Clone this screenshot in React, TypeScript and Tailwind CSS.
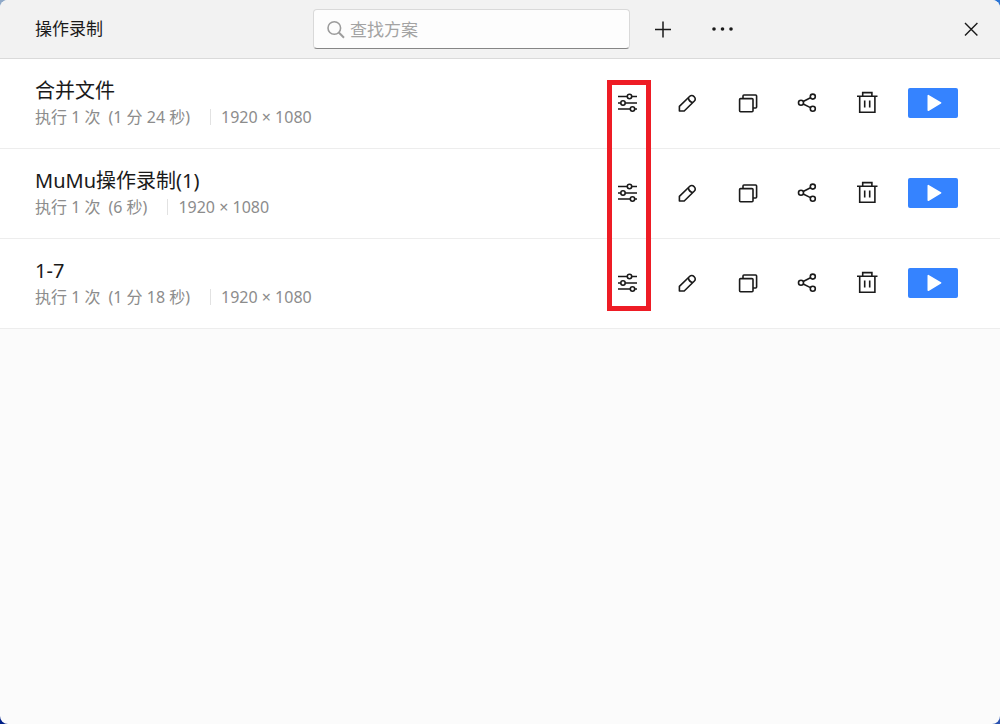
import { useState } from 'react';
import clsx from 'clsx';

interface Scheme {
    name: string;
    times: string;
    duration: string;
    size: string;
}

const schemes: Scheme[] = [
    { name: '合并文件', times: '执行 1 次', duration: '(1 分 24 秒)', size: '1920 × 1080' },
    { name: 'MuMu操作录制(1)', times: '执行 1 次', duration: '(6 秒)', size: '1920 × 1080' },
    { name: '1-7', times: '执行 1 次', duration: '(1 分 18 秒)', size: '1920 × 1080' },
];

function Icon({ children, className }: { children: React.ReactNode; className?: string }) {
    return (
        <svg
            viewBox="0 0 20 20"
            className={clsx('size-5 shrink-0 overflow-visible', className)}
            fill="none"
            stroke="currentColor"
            strokeWidth="1.6"
            aria-hidden="true"
        >
            {children}
        </svg>
    );
}

function IconButton({ label, children }: { label: string; children: React.ReactNode }) {
    return (
        <button type="button" aria-label={label} className="flex size-10 items-center justify-center rounded hover:bg-black/5">
            <Icon>{children}</Icon>
        </button>
    );
}

function TitleBar() {
    const [keyword, setKeyword] = useState('');

    return (
        <header className="flex items-center border-b border-[#dadada] bg-[#f2f2f2] py-[9px] pr-[9px] pl-[35px]">
            <h1 className="w-[278px] text-[17px] leading-7">操作录制</h1>

            <label className="flex h-10 w-[317px] items-center gap-1 rounded border border-[#d9d9d9] border-b-[#868686] bg-[#fdfdfd] px-3">
                <Icon className="text-[#9c9c9c]">
                    <circle cx="8.3" cy="9" r="6.3" />
                    <path d="M12.8 13.5L18 18.7" strokeWidth="2" />
                </Icon>
                <input
                    type="text"
                    aria-label="查找方案"
                    placeholder="查找方案"
                    value={keyword}
                    onChange={(e) => setKeyword(e.target.value)}
                    className="min-w-0 flex-1 bg-transparent pt-0.5 text-[17px] leading-7 outline-none placeholder:text-[#a3a3a3]"
                />
            </label>

            <div className="ml-[13px] flex gap-5">
                <IconButton label="新建">
                    <path d="M2 10.5h16M10 2.5v16" strokeWidth="1.5" />
                </IconButton>
                <IconButton label="更多">
                    <g fill="currentColor" stroke="none">
                        <circle cx="1" cy="10" r="1.8" />
                        <circle cx="9.5" cy="10" r="1.8" />
                        <circle cx="18" cy="10" r="1.8" />
                    </g>
                </IconButton>
            </div>

            <div className="ml-auto">
                <IconButton label="关闭">
                    <path d="M4 4l12.4 12.4M16.4 4L4 16.4" strokeWidth="1.4" />
                </IconButton>
            </div>
        </header>
    );
}

function SchemeRow({ scheme }: { scheme: Scheme }) {
    return (
        <li className="flex items-center gap-[21px] border-b border-[#ededed] bg-white pt-[18px] pr-[42px] pb-[19px] pl-[35px]">
            <div className="min-w-0 flex-1">
                <h2 className="text-xl leading-7">{scheme.name}</h2>
                <p className="flex items-center text-base leading-6 text-[#8c8c8c]">
                    <span>{scheme.times}</span>
                    <span className="ml-2">{scheme.duration}</span>
                    <span className="mr-2.5 ml-5 h-4 w-px bg-[#e2e2e2]" />
                    <span>{scheme.size}</span>
                </p>
            </div>

            <div className="flex gap-5">
                <IconButton label="设置">
                    <path d="M1 3.5h9.2M14.8 3.5H20M1 10h2.6M8.4 10H20M1 16h12.1M17.9 16H20" />
                    <circle cx="12.5" cy="3.5" r="2.2" />
                    <circle cx="6" cy="10" r="2.2" />
                    <circle cx="15.5" cy="16" r="2.2" />
                </IconButton>
                <IconButton label="编辑">
                    <path d="M2.4 18v-4.6L12.8 3.3a2.8 2.8 0 0 1 4 .1l.6.6a2.8 2.8 0 0 1 0 4L7.2 18zM11.4 5c.4 2.4 1.8 4 4.4 4.6" strokeLinejoin="round" />
                </IconButton>
                <IconButton label="复制">
                    <rect x="2.6" y="5.6" width="13.4" height="13.2" rx="1" />
                    <path d="M6 5.4V3a1 1 0 0 1 1-1h11.6a1 1 0 0 1 1 1v11a1 1 0 0 1-1 1H16" />
                </IconButton>
                <IconButton label="分享">
                    <circle cx="4" cy="9.8" r="2.5" />
                    <circle cx="15.8" cy="3.6" r="2.5" />
                    <circle cx="15.8" cy="15.8" r="2.5" />
                    <path d="M6.2 8.5l7.3-3.7M6.2 11l7.3 3.6" />
                </IconButton>
                <IconButton label="删除">
                    <path d="M0 3.3h20.5M5.7 3.3V-.4h9.2v3.7M2.7 3.3v15.9h15.2V3.3M7.7 7.5v7M12.7 7.5v7" />
                </IconButton>
            </div>

            <button type="button" aria-label="运行" className="flex h-[30px] w-[50px] items-center justify-center rounded-xs bg-[#3583ff] text-white hover:bg-[#2472ee]">
                <Icon>
                    <path d="M5.3 2.6v14.6l12.3-7.3z" fill="currentColor" strokeLinejoin="round" />
                </Icon>
            </button>
        </li>
    );
}

export default function App() {
    return (
        <div className="flex min-h-screen bg-[conic-gradient(#2b74d4_25%,#2a52b0_25%_50%,#001f87_50%_75%,#8fa9c8_75%)] font-['Noto_Sans','Noto_Sans_CJK_SC',sans-serif] text-[#1a1a1a]">
            <div className="flex flex-1 flex-col overflow-hidden rounded-lg bg-[#fbfbfb]">
                <TitleBar />
                <main className="relative">
                    <ul>
                        {schemes.map((scheme) => (
                            <SchemeRow key={scheme.name} scheme={scheme} />
                        ))}
                    </ul>
                    {/* highlight over the settings column */}
                    <div className="pointer-events-none absolute top-[21px] right-[349px] bottom-[18px] w-11 border-5 border-[#ee1c25]" />
                </main>
            </div>
        </div>
    );
}
